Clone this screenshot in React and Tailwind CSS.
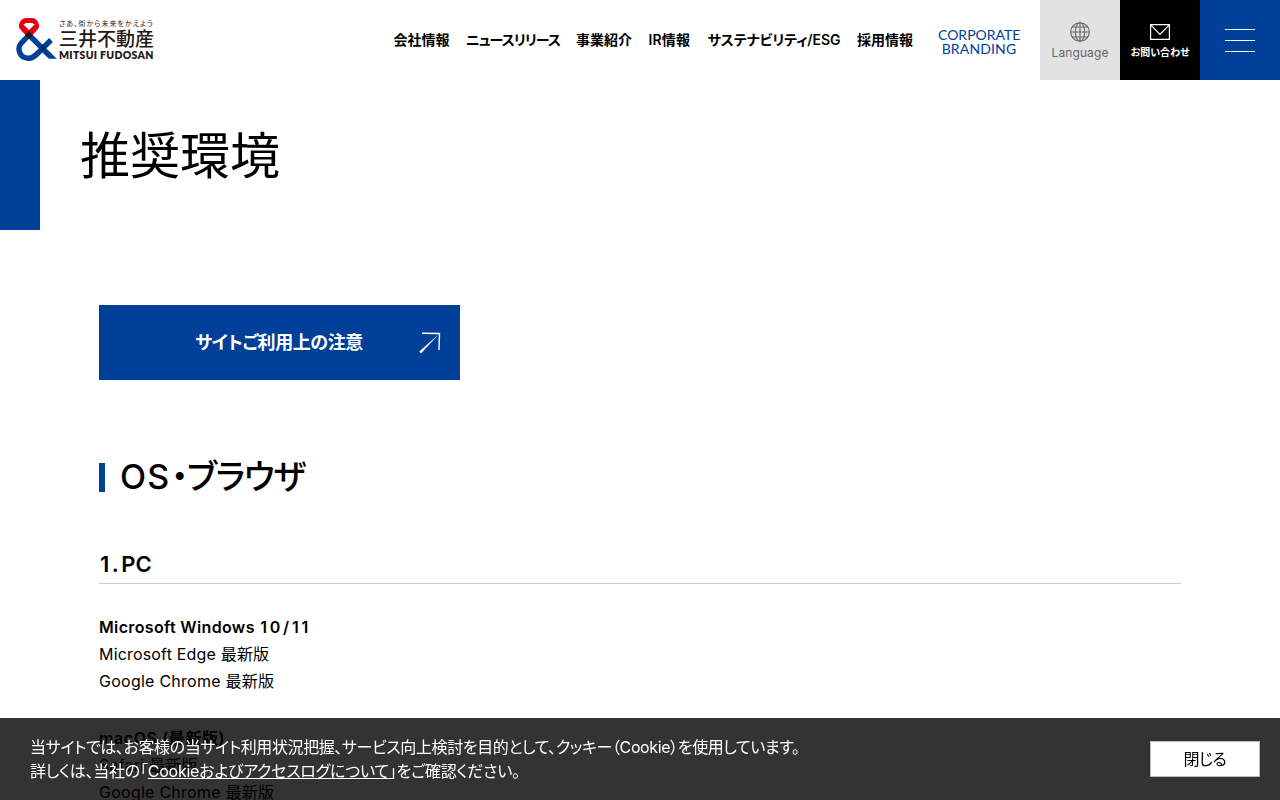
import React from "react";

const NAV_ITEMS = [
  { label: "会社情報", style: "w-[56px]" },
  { label: "ニュースリリース", style: "w-[94px] tracking-[-0.95px]" },
  { label: "事業紹介", style: "w-[56px]" },
  { label: "IR情報", style: "w-[43px] tracking-[0.2px]" },
  { label: "サステナビリティ/ESG", style: "w-[133px] tracking-[-0.1px]" },
  { label: "採用情報", style: "w-[56px]" },
];

function AmpersandMark() {
  return (
    <svg width="42" height="45" viewBox="14.5 17 42 45" fill="none" aria-hidden="true">
      {/* blue loop and tails */}
      <path d="M28.5 35 L21 42.8 C16.3 48 18.5 58.2 28 58.2 C32.5 58.2 35 55.5 37 53.5 L50.5 40" stroke="#004098" strokeWidth="5.4" />
      <path d="M28.5 35 L49 55.3" stroke="#004098" strokeWidth="5.4" />
      <path d="M45 48 L56.3 58.8 H48.5 L41 51.5 Z" fill="#004098" />
      {/* red ribbon */}
      <path d="M28.5 35 L22.3 28.5 C19.3 25.5 22 20.5 26 20.5 H31 C35 20.5 37.7 25.5 34.7 28.5 L28.5 35" stroke="#e60012" strokeWidth="5" />
      <path d="M22.5 24 H34.5 L28.5 30 Z" fill="#fff" />
      <path d="M21.5 24 L29.5 32" stroke="#e60012" strokeWidth="1.2" />
      <path d="M35.5 24 L27.5 32" stroke="#e60012" strokeWidth="1.2" />
      <path d="M28.5 31 L32.5 35 L28.5 39 L24.5 35 Z" fill="#231815" />
      <path d="M42 44.2 L45.7 47.9 L42 51.6 L38.3 47.9 Z" fill="#002a63" />
    </svg>
  );
}

function Logo() {
  return (
    <a href="#" className="flex pl-[15px] pt-[17px] text-[#231815]">
      <AmpersandMark />
      <span className="flex flex-col pl-[2px] whitespace-nowrap">
        <span className="h-[11px] text-[7px] leading-[13px] tracking-[1px]">さあ、街から未来をかえよう</span>
        <span className="h-[21px] text-[19px] leading-[24px] font-medium [font-feature-settings:normal]">三井不動産</span>
        <span className="h-[12px] font-[Lato] text-[10.5px] leading-[12px] font-extrabold tracking-[0.28px]">MITSUI FUDOSAN</span>
      </span>
    </a>
  );
}

function Header() {
  return (
    <header className="flex h-20 justify-between bg-white">
      <Logo />
      <div className="flex">
        <nav className="flex items-center gap-[16.3px] pr-[25px] pb-[2px] text-[14px] font-semibold">
          {NAV_ITEMS.map((item) => (
            <a key={item.label} href="#" className={`${item.style} whitespace-nowrap`}>
              {item.label}
            </a>
          ))}
        </nav>
        <a href="#" className="flex w-[102px] flex-col justify-center pt-[4px] font-[Lato] text-[14px] leading-[14px] text-[#004098]">
          <span className="w-[82px] text-center whitespace-nowrap">CORPORATE</span>
          <span className="w-[82px] text-center tracking-[0.15px] whitespace-nowrap">BRANDING</span>
        </a>
        <button className="flex w-20 flex-col items-center bg-[#e2e2e2] pt-[22px] text-[#666]">
          <svg width="20" height="20" viewBox="0 0 20 20" fill="none" stroke="#666" strokeWidth="1.1">
            <circle cx="10" cy="10" r="9.3" />
            <ellipse cx="10" cy="10" rx="4.7" ry="9.3" />
            <path d="M10 .7V19.3M.7 10H19.3M2.3 5H17.7M2.3 15H17.7" />
          </svg>
          <span className="mt-[2px] text-[12px] leading-[18px] tracking-[0.1px]">Language</span>
        </button>
        <a href="#" className="flex w-20 flex-col items-center bg-black pt-[24px] text-white">
          <svg width="20" height="16" viewBox="0 0 20 16" fill="none" stroke="#fff" strokeWidth="1.2">
            <path d="M.6 .6H19.4V15.4H.6ZM.8 .8L10 10.5L19.2 .8" />
          </svg>
          <span className="mt-[4px] text-[10px] leading-[16px] font-bold whitespace-nowrap">お問い合わせ</span>
        </a>
        <button className="flex w-20 flex-col items-center gap-[10px] bg-[#004098] pt-[29px]" aria-label="menu">
          <span className="h-px w-[30px] bg-white" />
          <span className="h-px w-[30px] bg-white" />
          <span className="h-px w-[30px] bg-white" />
        </button>
      </div>
    </header>
  );
}

function CookieBar() {
  return (
    <div className="fixed inset-x-0 bottom-0 flex h-[82px] items-center justify-between bg-black/80 pr-5 pl-[30px] text-white">
      <p className="text-[16px] leading-6 whitespace-nowrap">
        <span className="block tracking-[-0.39px]">当サイトでは、お客様の当サイト利用状況把握、サービス向上検討を目的として、クッキー（Cookie）を使用しています。</span>
        <span className="block tracking-[-0.24px]">
          詳しくは、当社の「
          <a href="#" className="underline">Cookieおよびアクセスログについて</a>
          」をご確認ください。
        </span>
      </p>
      <button className="h-9 w-[110px] border border-[#bbb] bg-white text-[16px] tracking-[-0.4px] text-black">閉じる</button>
    </div>
  );
}

export default function App() {
  return (
    <div className="h-screen overflow-hidden bg-white font-[Inter,'Noto_Sans_CJK_JP',sans-serif] text-black [font-feature-settings:'palt']">
      <Header />
      <div className="flex h-[150px] border-l-[40px] border-[#004098] pl-10">
        <h1 className="pt-[39px] text-[50px] leading-[75px] font-normal">推奨環境</h1>
      </div>
      <main className="px-[99px] pt-[75px]">
        <a href="#" className="flex h-[75px] w-[361px] items-center bg-[#004098] text-white">
          <span className="w-[320px] pl-[40px] text-center text-[18px] font-bold tracking-[-0.4px] whitespace-nowrap">サイトご利用上の注意</span>
          <svg width="22" height="22" viewBox="0 0 22 22" fill="none" stroke="#fff">
            <path d="M3 1.2L20.5 1.5L20 18" strokeWidth="1.4" />
            <path d="M20 2L.3 19.5L2 21.4Z" fill="#fff" stroke="none" />
          </svg>
        </a>
        <h2 className="mt-[83px] flex h-[29px] items-center border-l-6 border-[#004098] pl-[15px] text-[34px] leading-[29px] font-medium whitespace-nowrap">
          <span className="-mt-[2px] tracking-[1.1px]">OS</span>
          <span className="-mt-[2px] pl-px tracking-[-1.2px]">・ブラウザ</span>
        </h2>
        <h3 className="mt-[56px] h-[36px] border-b border-[#ccc] pl-px text-[22px] leading-[32px] font-semibold">
          <span className="tracking-[2.5px]">1.</span>
          <span>PC</span>
        </h3>
        <section className="pt-[30px] text-[16px] leading-[27px]">
          <h4 className="font-semibold tracking-[0.35px]">
            Microsoft Windows <span className="pl-px tracking-[2.8px]">10/11</span>
          </h4>
          <p className="tracking-[0.18px]">Microsoft Edge 最新版</p>
          <p className="tracking-[0.25px]">Google Chrome 最新版</p>
        </section>
        <section className="pt-[30px] text-[16px] leading-[27px]">
          <h4 className="font-semibold tracking-[0.6px]">macOS (最新版)</h4>
          <p className="tracking-[0.2px]">Safari 最新版</p>
          <p className="tracking-[0.25px]">Google Chrome 最新版</p>
        </section>
      </main>
      <CookieBar />
    </div>
  );
}
